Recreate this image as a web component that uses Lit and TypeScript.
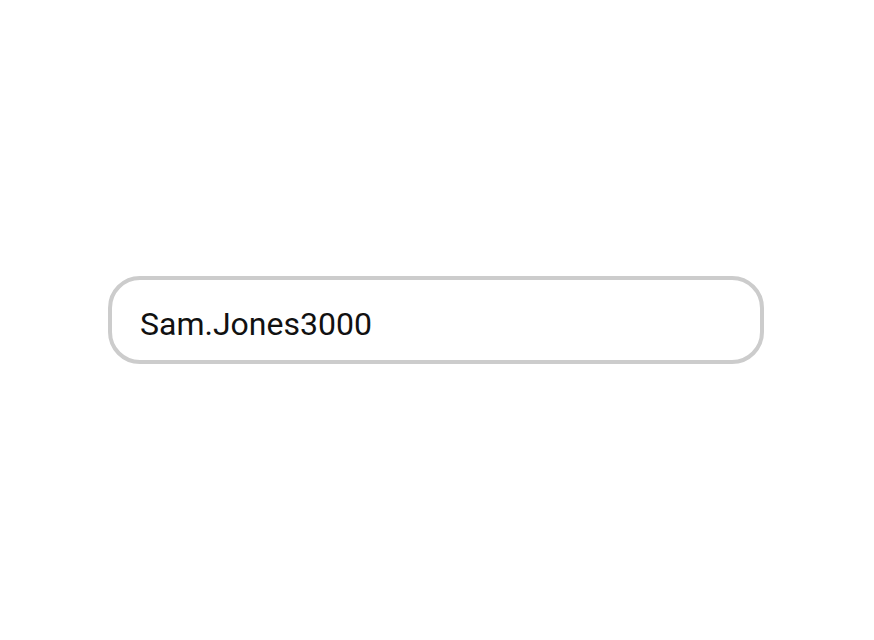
import { LitElement, html, css } from "lit";
import { customElement, state } from "lit/decorators.js";

@customElement("app-root")
export class AppRoot extends LitElement {
  static styles = css`
    :host {
      display: flex;
      align-items: center;
      min-height: 100vh;
      box-sizing: border-box;
      padding: 0 110px 0 108px;
      background: #fff;
    }
    .field {
      flex: 1;
      min-width: 0;
      box-sizing: border-box;
      margin: 0;
      padding: 26px 28px 18px;
      border: 4px solid #ccc;
      border-radius: 32px;
      outline: none;
      background: #fff;
      color: #111;
      font-family: Roboto, sans-serif;
      font-size: 32px;
      line-height: 36px;
    }
  `;

  @state() private username = "Sam.Jones3000";

  render() {
    return html`<input
      class="field"
      type="text"
      aria-label="Username"
      autocomplete="off"
      spellcheck="false"
      .value=${this.username}
      @input=${(e: Event) => (this.username = (e.target as HTMLInputElement).value)}
    />`;
  }
}
